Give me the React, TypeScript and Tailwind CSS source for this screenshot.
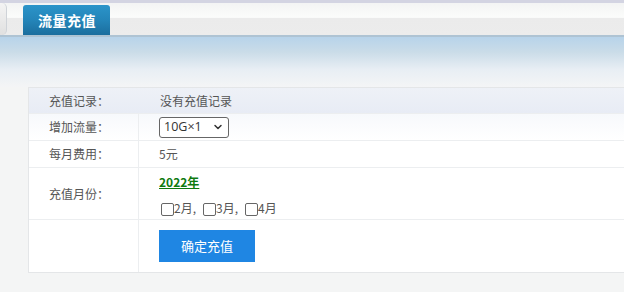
import React from 'react';
import { ChevronDown } from 'lucide-react';

export default function App() {
  const font = { fontFamily: '"Microsoft YaHei", "Noto Sans CJK SC", "Noto Sans", sans-serif' };
  return (
    <div className="w-[624px] h-[292px] bg-[#f4f5f5] overflow-hidden text-[12px] text-[#555]" style={font}>
      {/* top header */}
      <div className="h-[3px] bg-[#d3d4e2]" />
      <div className="relative h-[34px] bg-[linear-gradient(#f3f4f4_0%,#fbfcfb_45%,#ebebeb_48%,#ececec_100%)] border-b-2 border-[#aec3d3]">
        <div className="absolute left-0 top-0 h-[32px] w-[7px] rounded-r-[5px] bg-[linear-gradient(#f4f4f4,#e0e0e0)] border-r border-[#cfd3d8]" />
        <div className="absolute left-[23px] top-[2px] h-[30px] w-[87px] rounded-t-[3px] bg-[linear-gradient(#2b94c9_0%,#2485b9_50%,#1b6e9e_100%)] flex items-center pl-[15px]">
          <span className="text-white font-bold text-[14px] tracking-[0.5px]">流量充值</span>
        </div>
      </div>
      <div className="h-[50px] bg-[linear-gradient(#b7d3ea_0%,#cadce8_30%,#e8eef4_65%,#f4f5f6_100%)]" />

      {/* table */}
      <div className="ml-[28px] bg-white border-t border-l border-b border-[#e4e6e8]">
        <div className="flex h-[26px] bg-[linear-gradient(#eef1f7,#e8ecf5)] border-b border-[#eceef0]">
          <div className="w-[110px] pl-[20px] flex items-center">充值记录：</div>
          <div className="flex-1 pl-[21px] flex items-center">没有充值记录</div>
        </div>
        <div className="flex h-[27px] bg-[linear-gradient(#f7f9fc,#ffffff)] border-b border-[#eceef0]">
          <div className="w-[110px] pl-[20px] flex items-center border-r border-[#eceef0]">增加流量：</div>
          <div className="flex-1 pl-[20px] flex items-center">
            <div className="w-[70px] h-[21px] border border-[#666] rounded-[3px] flex items-center justify-between pl-[4px] pr-[4px] text-[#333] bg-white">
              <span style={{ fontFamily: '"Open Sans", "Noto Sans CJK SC", sans-serif' }} className="text-[12.5px]">10G×1</span>
              <ChevronDown className="w-[12px] h-[12px] text-[#333]" strokeWidth={3} />
            </div>
          </div>
        </div>
        <div className="flex h-[27px] border-b border-[#eceef0]">
          <div className="w-[110px] pl-[20px] flex items-center border-r border-[#eceef0]">每月费用：</div>
          <div className="flex-1 pl-[20px] flex items-center">5元</div>
        </div>
        <div className="flex h-[52px] border-b border-[#eceef0]">
          <div className="w-[110px] pl-[20px] flex items-center border-r border-[#eceef0]">充值月份：</div>
          <div className="flex-1 pl-[20px] flex flex-col pt-[6px]">
            <span className="text-[#0f7a10] font-bold underline text-[12px] leading-[16px]">2022年</span>
            <div className="flex items-center mt-[9px] pl-[2px] text-[#555]">
              {['2月,', '3月,', '4月'].map(m => (
                <span key={m} className="flex items-center mr-[7px]">
                  <span className="inline-block w-[13px] h-[13px] border border-[#666] rounded-[2px] bg-white mt-[2px]" />
                  <span>{m}</span>
                </span>
              ))}
            </div>
          </div>
        </div>
        <div className="flex h-[52px]">
          <div className="w-[110px] border-r border-[#eceef0]" />
          <div className="flex-1 pl-[20px] pt-[10px]">
            <div className="w-[96px] h-[32px] bg-[#1f86e3] text-white text-[13px] flex items-center justify-center">确定充值</div>
          </div>
        </div>
      </div>
    </div>
  );
}
